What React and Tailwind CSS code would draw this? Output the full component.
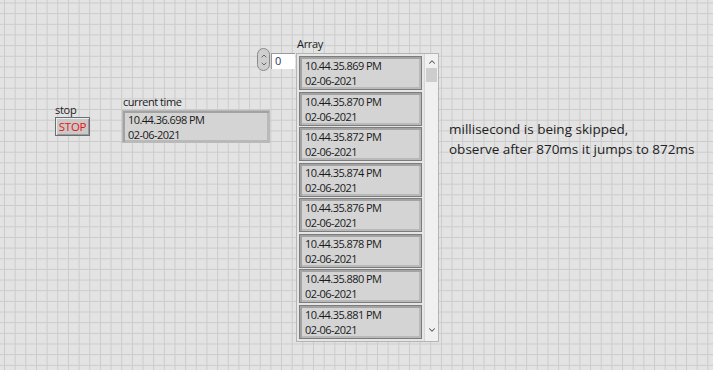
import { ChevronUp, ChevronDown } from 'lucide-react'

const rows = [
  '10.44.35.869 PM',
  '10.44.35.870 PM',
  '10.44.35.872 PM',
  '10.44.35.874 PM',
  '10.44.35.876 PM',
  '10.44.35.878 PM',
  '10.44.35.880 PM',
  '10.44.35.881 PM',
]

function TimeCell({ time, date, className = '' }) {
  return (
    <div
      className={`flex flex-col justify-center border border-[#7c7c7c] bg-[#d4d4d4] pl-[5px] leading-[15px] tracking-[-0.55px] text-[#1a1a1a] shadow-[inset_2px_2px_0_#a3a3a3,inset_-2px_-2px_0_#b9b9b9] ${className}`}
    >
      <span>{time}</span>
      <span>{date}</span>
    </div>
  )
}

export default function App() {
  return (
    <div className="relative h-[370px] w-[713px] overflow-hidden bg-[#e3e3e3] bg-[linear-gradient(to_right,#cbcbcb_1px,transparent_1px),linear-gradient(to_bottom,#cbcbcb_1px,transparent_1px)] bg-[size:10.667px_10.667px] bg-[position:4px_2.5px] font-['Open_Sans',sans-serif] text-[11px]">
      {/* stop */}
      <div className="absolute left-[55px] top-[103px] flex flex-col gap-[1px]">
        <span className="leading-[13px] tracking-[-0.3px] text-[#1a1a1a]">stop</span>
        <div className="flex h-[19px] w-[35px] items-center justify-center border border-[#6e6e6e] bg-[#c9c9c9] text-[11.5px] tracking-[-0.3px] text-[#f01010] shadow-[inset_1px_1px_0_#ededed,inset_-1px_-1px_0_#9a9a9a]">
          STOP
        </div>
      </div>

      {/* current time */}
      <div className="absolute left-[122px] top-[95px] flex flex-col gap-[1px]">
        <span className="pl-[1px] leading-[14px] tracking-[-0.45px] text-[#1a1a1a]">current time</span>
        <TimeCell time="10.44.36.698 PM" date="02-06-2021" className="h-[33px] w-[148px] border-[#b9b9b9] shadow-[inset_1px_1px_0_#a9a9a9]" />
      </div>

      {/* array */}
      <div className="absolute left-[257px] top-[37px] flex gap-[1px]">
        <div className="flex items-start gap-[1px] pt-[11px]">
          <div className="flex h-[23px] w-[13px] flex-col items-center justify-center rounded-full border border-[#8a8a8a] bg-[#cfcfcf] text-[#666]">
            <ChevronUp size={8} strokeWidth={3} />
            <ChevronDown size={8} strokeWidth={3} />
          </div>
          <div className="mt-[5px] flex h-[16px] w-[24px] items-center bg-white pl-[4px] text-[#1f3566] shadow-[inset_1px_1px_0_#9a9a9a]">
            0
          </div>
        </div>
        <div className="flex flex-col">
          <span className="pl-[1px] leading-[14px] tracking-[-0.3px] text-[#1a1a1a]">Array</span>
          <div className="mt-[2px] flex h-[289px] w-[143px] border border-[#b4b4b4] bg-[#e6e6e6]">
            <div className="flex flex-col gap-[1.6px] p-[2px]">
              {rows.map((t) => (
                <TimeCell key={t} time={t} date="02-06-2021" className="h-[34px] w-[123px]" />
              ))}
            </div>
            <div className="flex w-[16px] flex-col items-center border-l border-[#d6d6d6] bg-[#f0f0f0]">
              <ChevronUp size={10} strokeWidth={2.5} className="mt-[3px] text-[#555]" />
              <div className="mt-[1px] h-[14px] w-[11px] bg-[#cdcdcd]" />
              <div className="flex-1" />
              <ChevronDown size={10} strokeWidth={2.5} className="mb-[6px] text-[#555]" />
            </div>
          </div>
        </div>
      </div>

      {/* note */}
      <div className="absolute left-[449px] top-[119px] text-[13.5px] leading-[20px] text-[#222]">
        <p>millisecond is being skipped,</p>
        <p>observe after 870ms it jumps to 872ms</p>
      </div>
    </div>
  )
}
